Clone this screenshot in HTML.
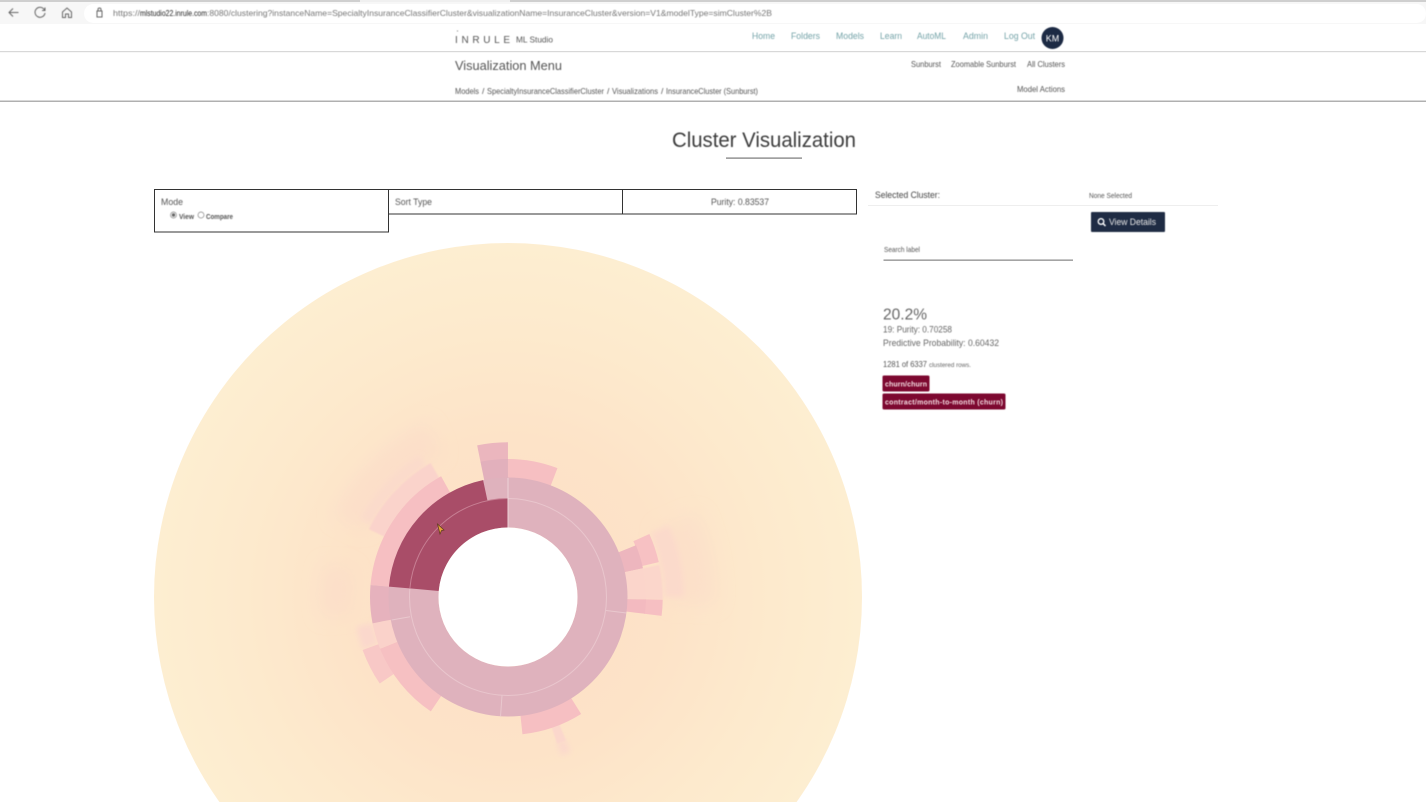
<!DOCTYPE html>
<html lang="en">
<head>
<meta charset="utf-8">
<title>Cluster Visualization</title>
<style>
html,body{margin:0;padding:0;width:1426px;height:802px;overflow:hidden;background:#fff}
svg{display:block;position:absolute;left:0;top:0}
text{font-family:"Liberation Sans",sans-serif;fill:#555}
circle.a{fill:none}
.txt{filter:blur(.4px)}
</style>
</head>
<body>
<svg width="1426" height="802" viewBox="0 0 1426 802" xmlns="http://www.w3.org/2000/svg">
<defs>
<radialGradient id="disc" gradientUnits="userSpaceOnUse" cx="508" cy="597" r="354">
<stop offset="0" stop-color="#fde0c5"/>
<stop offset=".45" stop-color="#fde3c8"/>
<stop offset=".75" stop-color="#fdeacd"/>
<stop offset="1" stop-color="#fdeed1"/>
</radialGradient>
<filter id="b6" x="-30%" y="-30%" width="160%" height="160%"><feGaussianBlur stdDeviation="9"/></filter>
<filter id="b1" x="-30%" y="-30%" width="160%" height="160%"><feGaussianBlur stdDeviation="3"/></filter>
<filter id="b05" x="-10%" y="-10%" width="120%" height="120%"><feGaussianBlur stdDeviation=".8"/></filter>
<filter id="bs" x="-10%" y="-10%" width="120%" height="120%"><feGaussianBlur stdDeviation=".4"/></filter>
</defs>

<!-- browser chrome -->
<rect x="0" y="0" width="1426" height="24" fill="#f7f7f7"/>
<rect x="0" y="0" width="1426" height="2" fill="#cfcfcf"/>
<rect x="360" y="0" width="150" height="2" fill="#f0f0f0"/>
<rect x="84" y="4" width="1342" height="19" rx="9.500" fill="#fff"/>
<g fill="none" stroke="#666" stroke-width="1" filter="url(#bs)">
<path d="M18.500 12.500H9M13 8.500l-4 4 4 4"/>
<path d="M44.500 10a5 5 0 1 0 .5 3M45 7.500v3h-3"/>
<path d="M62.500 12l4.500-4 4.500 4v5.500h-3v-3.500h-3v3.500h-3z"/>
<path d="M97 11h5v6h-5zM98 11V9.500a1.500 1.500 0 0 1 3 0V11"/>
</g>
<g class="txt" font-size="8.500">
<text x="113" y="16" textLength="27" lengthAdjust="spacingAndGlyphs" style="fill:#777">https://</text>
<text x="140" y="16" textLength="67" lengthAdjust="spacingAndGlyphs" style="fill:#222">mlstudio22.inrule.com</text>
<text x="207" y="16" textLength="565" lengthAdjust="spacingAndGlyphs" style="fill:#777">:8080/clustering?instanceName=SpecialtyInsuranceClassifierCluster&amp;visualizationName=InsuranceCluster&amp;version=V1&amp;modelType=simCluster%2B</text>
</g>

<!-- header -->
<rect x="0" y="51" width="1426" height="1.200" fill="#d8d8d8"/>
<rect x="0" y="100.500" width="1426" height="1.500" fill="#b0b0b0"/>
<g class="txt">
<text x="455" y="43" font-size="10" textLength="55" lengthAdjust="spacing" style="fill:#555">INRULE</text>
<circle cx="457.500" cy="31" r=".6" fill="#888"/>
<text x="516" y="42.500" font-size="8.500" textLength="37" lengthAdjust="spacingAndGlyphs" style="fill:#555">ML Studio</text>
<g font-size="9">
<text x="752" y="39" textLength="23" lengthAdjust="spacingAndGlyphs" style="fill:#74a3a8">Home</text>
<text x="791" y="39" textLength="29" lengthAdjust="spacingAndGlyphs" style="fill:#74a3a8">Folders</text>
<text x="836" y="39" textLength="28" lengthAdjust="spacingAndGlyphs" style="fill:#74a3a8">Models</text>
<text x="880" y="39" textLength="22" lengthAdjust="spacingAndGlyphs" style="fill:#74a3a8">Learn</text>
<text x="917" y="39" textLength="29" lengthAdjust="spacingAndGlyphs" style="fill:#74a3a8">AutoML</text>
<text x="963" y="39" textLength="25" lengthAdjust="spacingAndGlyphs" style="fill:#74a3a8">Admin</text>
<text x="1004" y="39" textLength="31" lengthAdjust="spacingAndGlyphs" style="fill:#74a3a8">Log Out</text>
</g>
<circle cx="1052.500" cy="38" r="11" fill="#1c2a44"/>
<text x="1052.500" y="41.500" font-size="9" text-anchor="middle" style="fill:#fff">KM</text>
<text x="455" y="70" font-size="13" textLength="107" lengthAdjust="spacingAndGlyphs" style="fill:#555">Visualization Menu</text>
<g font-size="8.500">
<text x="911" y="67" textLength="30" lengthAdjust="spacingAndGlyphs">Sunburst</text>
<text x="951" y="67" textLength="65" lengthAdjust="spacingAndGlyphs">Zoomable Sunburst</text>
<text x="1027" y="67" textLength="38" lengthAdjust="spacingAndGlyphs">All Clusters</text>
<text x="1017" y="92" textLength="48" lengthAdjust="spacingAndGlyphs">Model Actions</text>
<text x="455" y="94" textLength="24" lengthAdjust="spacingAndGlyphs">Models</text>
<text x="482" y="94">/</text>
<text x="487" y="94" textLength="117" lengthAdjust="spacingAndGlyphs">SpecialtyInsuranceClassifierCluster</text>
<text x="607" y="94">/</text>
<text x="612" y="94" textLength="46" lengthAdjust="spacingAndGlyphs">Visualizations</text>
<text x="661" y="94">/</text>
<text x="666" y="94" textLength="92" lengthAdjust="spacingAndGlyphs">InsuranceCluster (Sunburst)</text>
</g>
<text x="672" y="147" font-size="21" textLength="184" lengthAdjust="spacingAndGlyphs" style="fill:#3c3c3c">Cluster Visualization</text>
</g>
<rect x="726" y="157.500" width="76" height="1.200" fill="#777"/>

<!-- controls -->
<g fill="none" stroke="#333" stroke-width="1">
<rect x="154.500" y="189.500" width="234" height="42.500"/>
<rect x="388.500" y="189.500" width="234" height="24.500"/>
<rect x="622.500" y="189.500" width="234" height="24.500"/>
</g>
<g class="txt">
<text x="161" y="205" font-size="9.500" textLength="22" lengthAdjust="spacingAndGlyphs">Mode</text>
<text x="395" y="205" font-size="9.500" textLength="37" lengthAdjust="spacingAndGlyphs">Sort Type</text>
<text x="711" y="205" font-size="9.500" textLength="58" lengthAdjust="spacingAndGlyphs">Purity: 0.83537</text>
<circle cx="173.500" cy="215" r="3" fill="#fff" stroke="#888" stroke-width=".7"/>
<circle cx="173.500" cy="215" r="1.700" fill="#666"/>
<text x="179" y="219" font-size="7" font-weight="700" textLength="15" lengthAdjust="spacingAndGlyphs">View</text>
<circle cx="201" cy="215" r="3" fill="#fff" stroke="#888" stroke-width=".7"/>
<text x="206" y="219" font-size="7" font-weight="700" textLength="27" lengthAdjust="spacingAndGlyphs">Compare</text>
</g>

<!-- sunburst -->
<circle cx="508" cy="597" r="354" fill="url(#disc)"/>
<g transform="rotate(-90 508 597)">
<g filter="url(#b6)">
<circle class="a" cx="508" cy="597" r="175" stroke="#fbdac9" stroke-opacity=".5" stroke-width="35" pathLength="360" stroke-dasharray="40 360" transform="rotate(295 508 597)"/>
<circle class="a" cx="508" cy="597" r="172" stroke="#fbd9c9" stroke-opacity=".5" stroke-width="30" pathLength="360" stroke-dasharray="16 360" transform="rotate(264 508 597)"/>
<circle class="a" cx="508" cy="597" r="185" stroke="#fcdbc9" stroke-opacity=".5" stroke-width="45" pathLength="360" stroke-dasharray="26 360" transform="rotate(66 508 597)"/>
</g>
<g filter="url(#b1)">
<circle class="a" cx="508" cy="597" r="166" stroke="#fbd8cc" stroke-opacity=".8" stroke-width="20" pathLength="360" stroke-dasharray="24 360" transform="rotate(66 508 597)"/>
<circle class="a" cx="508" cy="597" r="160" stroke="#fbd9cc" stroke-width="14" pathLength="360" stroke-dasharray="3.500 360" transform="rotate(158 508 597)"/>
<circle class="a" cx="508" cy="597" r="146" stroke="#fbd8cc" stroke-width="17" pathLength="360" stroke-dasharray="9 360" transform="rotate(250 508 597)"/>
<circle class="a" cx="508" cy="597" r="160" stroke="#fbd9cc" stroke-opacity=".7" stroke-width="14" pathLength="360" stroke-dasharray="30 360" transform="rotate(298 508 597)"/>
</g>
<g filter="url(#b05)">
<!-- ring 4 soft -->
<circle class="a" cx="508" cy="597" r="146" stroke="#fad3cb" stroke-width="17.500" pathLength="360" stroke-dasharray="34 360" transform="rotate(296 508 597)"/>
<circle class="a" cx="508" cy="597" r="146" stroke="#fbd6cb" stroke-width="17.500" pathLength="360" stroke-dasharray="13 360" transform="rotate(78 508 597)"/>
<circle class="a" cx="508" cy="597" r="146" stroke="#fbd7cc" stroke-width="17.500" pathLength="360" stroke-dasharray="3.500 360" transform="rotate(158 508 597)"/>
</g>
<!-- ring 4 -->
<circle class="a" cx="508" cy="597" r="146" stroke="#ebb6be" stroke-width="17.500" pathLength="360" stroke-dasharray="11.500 360" transform="rotate(348.500 508 597)"/>
<circle class="a" cx="508" cy="597" r="146" stroke="#f7c1c3" stroke-width="17.500" pathLength="360" stroke-dasharray="11 360" transform="rotate(66 508 597)"/>
<circle class="a" cx="508" cy="597" r="146" stroke="#f6bfc2" stroke-width="17.500" pathLength="360" stroke-dasharray="6 360" transform="rotate(91 508 597)"/>
<circle class="a" cx="508" cy="597" r="146" stroke="#f8c8c6" stroke-width="17.500" pathLength="360" stroke-dasharray="14 360" transform="rotate(236 508 597)"/>
<!-- ring 3 -->
<circle class="a" cx="508" cy="597" r="128.500" stroke="#f6bfc2" stroke-width="19" pathLength="360" stroke-dasharray="56 360" transform="rotate(275 508 597)"/>
<circle class="a" cx="508" cy="597" r="128.500" stroke="#e2b0bc" stroke-width="19" pathLength="360" stroke-dasharray="11.500 360" transform="rotate(348.500 508 597)"/>
<circle class="a" cx="508" cy="597" r="128.500" stroke="#f6bfc2" stroke-width="19" pathLength="360" stroke-dasharray="21 360" transform="rotate(0 508 597)"/>
<circle class="a" cx="508" cy="597" r="128.500" stroke="#edb6be" stroke-width="19" pathLength="360" stroke-dasharray="10 360" transform="rotate(68 508 597)"/>
<circle class="a" cx="508" cy="597" r="128.500" stroke="#fbd5cb" stroke-width="19" pathLength="360" stroke-dasharray="13 360" transform="rotate(78 508 597)"/>
<circle class="a" cx="508" cy="597" r="128.500" stroke="#f3bac0" stroke-width="19" pathLength="360" stroke-dasharray="6 360" transform="rotate(91 508 597)"/>
<circle class="a" cx="508" cy="597" r="128.500" stroke="#f6bfc2" stroke-width="19" pathLength="360" stroke-dasharray="26 360" transform="rotate(148 508 597)"/>
<circle class="a" cx="508" cy="597" r="128.500" stroke="#f6c0c2" stroke-width="19" pathLength="360" stroke-dasharray="34 360" transform="rotate(214 508 597)"/>
<circle class="a" cx="508" cy="597" r="128.500" stroke="#fad2ca" stroke-width="19" pathLength="360" stroke-dasharray="11 360" transform="rotate(248 508 597)"/>
<circle class="a" cx="508" cy="597" r="128.500" stroke="#e6b2bd" stroke-width="19" pathLength="360" stroke-dasharray="16 360" transform="rotate(259 508 597)"/>
<!-- rings 1-2 -->
<circle class="a" cx="508" cy="597" r="94.500" stroke="#dfb2bd" stroke-width="50"/>
<circle class="a" cx="508" cy="597" r="84" stroke="#a94d68" stroke-width="29" pathLength="360" stroke-dasharray="85 360" transform="rotate(275 508 597)"/>
<circle class="a" cx="508" cy="597" r="108.500" stroke="#a94d68" stroke-width="22" pathLength="360" stroke-dasharray="73 360" transform="rotate(275 508 597)"/>
<circle class="a" cx="508" cy="597" r="98.500" stroke="#e9c6cd" stroke-width="1" pathLength="360" stroke-dasharray="275 360"/>
<circle class="a" cx="508" cy="597" r="98.500" stroke="#c77f93" stroke-width="1" pathLength="360" stroke-dasharray="85 360" transform="rotate(275 508 597)"/>
</g>
<path d="M508 528V478" stroke="#ecd3d7" stroke-width="1"/>
<path d="M606 610.500l20.500 2.500M502 695.500l-1.500 21M410 616.700L391.700 620" stroke="#e9c8ce" stroke-width="1"/>
<circle cx="508" cy="597" r="69.500" fill="#fff"/>
<!-- cursor -->
<path d="M437.500 524l6.500 6-2.500.5-1.500 3.500z" fill="#e8a33a" stroke="#5a3c1a" stroke-width=".7"/>

<!-- right panel -->
<rect x="868" y="205" width="350" height="1" fill="#eeeeee"/>
<rect x="883.500" y="259.500" width="189.500" height="1.300" fill="#8e8e8e"/>
<g class="txt">
<text x="875" y="198" font-size="9.500" textLength="65" lengthAdjust="spacingAndGlyphs" style="fill:#444">Selected Cluster:</text>
<text x="1089" y="198" font-size="7.500" textLength="43" lengthAdjust="spacingAndGlyphs">None Selected</text>
<rect x="1091" y="212" width="74" height="20" rx="1" fill="#1f2c44"/>
<circle cx="1101" cy="221.500" r="2.800" fill="none" stroke="#fff" stroke-width="1.300"/>
<path d="M1103 223.500l2.500 2.500" stroke="#fff" stroke-width="1.500"/>
<text x="1109" y="225" font-size="9" textLength="47" lengthAdjust="spacingAndGlyphs" style="fill:#e8e8e8">View Details</text>
<text x="884" y="252" font-size="7.500" textLength="36" lengthAdjust="spacingAndGlyphs">Search label</text>
<text x="883" y="319.500" font-size="16" textLength="44" lengthAdjust="spacingAndGlyphs" style="fill:#666">20.2%</text>
<text x="883" y="332.500" font-size="9.500" textLength="69" lengthAdjust="spacingAndGlyphs" style="fill:#666">19: Purity: 0.70258</text>
<text x="883" y="346" font-size="9.500" textLength="116" lengthAdjust="spacingAndGlyphs" style="fill:#666">Predictive Probability: 0.60432</text>
<text x="883" y="367" font-size="8.500" textLength="44" lengthAdjust="spacingAndGlyphs" style="fill:#555">1281 of 6337</text>
<text x="929" y="367" font-size="6.500" textLength="42" lengthAdjust="spacingAndGlyphs" style="fill:#666">clustered rows.</text>
<rect x="882.500" y="375.500" width="47" height="16" rx="1.500" fill="#7d0830"/>
<text x="885" y="386.500" font-size="7" font-weight="700" textLength="42" lengthAdjust="spacing" style="fill:#f6dfe4">churn/churn</text>
<rect x="882.500" y="393.500" width="123" height="16" rx="1.500" fill="#7d0830"/>
<text x="885" y="404.500" font-size="7" font-weight="700" textLength="118" lengthAdjust="spacing" style="fill:#f6dfe4">contract/month-to-month (churn)</text>
</g>
</svg>
</body>
</html>
